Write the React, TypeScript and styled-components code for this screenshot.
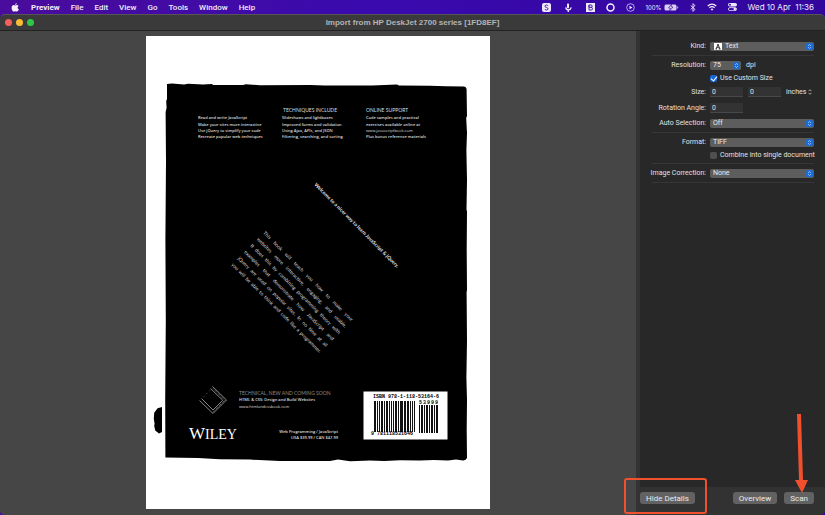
import React from "react";
import styled, { createGlobalStyle } from "styled-components";

const Global = createGlobalStyle`
  * { box-sizing: border-box; }
  html, body, #root { margin: 0; height: 100%; }
  body {
    font-family: Roboto, "Liberation Sans", sans-serif;
    font-size: 7px;
    line-height: 9px;
    color: #e2e2e2;
    background: #1c0a3c;
  }
  button, input, select { font: inherit; color: inherit; margin: 0; }
`;

const Desktop = styled.div`
  display: flex;
  flex-direction: column;
  min-height: 100vh;
  background: linear-gradient(90deg, #4a0c9c 0%, #3a0aae 45%, #32069c 100%);
`;

const MenuBar = styled.nav`
  display: flex;
  align-items: center;
  justify-content: space-between;
  height: 14px;
  padding: 0 11px;
  font-size: 8px;
  color: #f1ecfa;
`;

const MenuGroup = styled.div<{ $gap?: number }>`
  display: flex;
  align-items: center;
  gap: ${(p) => p.$gap ?? 11}px;
  white-space: nowrap;
`;

const MenuItem = styled.button<{ $bold?: boolean }>`
  padding: 0;
  border: 0;
  background: none;
  font-weight: ${(p) => (p.$bold ? 700 : 500)};
`;

const Battery = styled.span`
  display: flex;
  align-items: center;
  gap: 2px;
  font-family: Inter, sans-serif;
  font-size: 6px;
`;

const Clock = styled.span`
  font-family: Inter, sans-serif;
`;

const Window = styled.main`
  flex: 1;
  display: flex;
  flex-direction: column;
  border-radius: 5px;
  border-top: 1px solid #555;
  overflow: hidden;
  background: #464646;
`;

const TitleBar = styled.header`
  display: grid;
  grid-template-columns: 1fr auto 1fr;
  align-items: center;
  height: 16px;
  padding: 0 5px;
  background: #3a3a3a;
  border-bottom: 1px solid #222;
`;

const Lights = styled.div`
  display: flex;
  gap: 4px;
`;

const Light = styled.button<{ $color: string }>`
  width: 7px;
  height: 7px;
  padding: 0;
  border: 0;
  border-radius: 50%;
  background: ${(p) => p.$color};
`;

const Title = styled.h1`
  margin: 0;
  font-family: "Liberation Sans", sans-serif;
  font-size: 8px;
  font-weight: 700;
  color: #b4b4b4;
`;

const Body = styled.div`
  flex: 1;
  display: flex;
`;

const Preview = styled.section`
  flex: 1;
  display: flex;
  justify-content: center;
  align-items: flex-start;
  padding-top: 5px;
  background: #464646;
`;

const Divider = styled.div`
  width: 4px;
  background: #333;
`;

const Sidebar = styled.aside`
  display: flex;
  flex-direction: column;
  width: 185px;
  background: #282828;
`;

const Form = styled.form`
  flex: 1;
  display: flex;
  flex-direction: column;
  padding: 6px 11px 0 12px;
`;

const Section = styled.div`
  display: flex;
  flex-direction: column;
  gap: 4px;
  padding: 4px 0;
  border-bottom: 1px solid #363636;
`;

const Row = styled.div<{ $height?: number }>`
  display: grid;
  grid-template-columns: 54px 1fr;
  column-gap: 4px;
  align-items: center;
  height: ${(p) => p.$height ?? 10}px;
`;

const Label = styled.label`
  justify-self: end;
  white-space: nowrap;
`;

const Controls = styled.div`
  grid-column: 2;
  display: flex;
  align-items: center;
  gap: 5px;
`;

const SelectBox = styled.span<{ $width?: number }>`
  position: relative;
  display: block;
  width: ${(p) => (p.$width ? `${p.$width}px` : "100%")};
  height: 9px;
`;

const NativeSelect = styled.select<{ $indent?: number }>`
  appearance: none;
  display: block;
  width: 100%;
  height: 9px;
  padding: 0 10px 0 ${(p) => p.$indent ?? 3}px;
  border: 0;
  border-radius: 2px;
  background: #5d5d5d;
  color: #ececec;
`;

const SelectArrow = styled.svg`
  position: absolute;
  right: 1px;
  top: 1px;
  pointer-events: none;
`;

const SelectIcon = styled.svg`
  position: absolute;
  left: 4px;
  top: 1px;
  pointer-events: none;
`;

const Field = styled.input`
  width: 33px;
  height: 10px;
  padding: 0 2px;
  border: 0;
  border-bottom: 1px solid #484848;
  background: #333;
  line-height: 9px;
`;

const UnitBox = styled.span`
  display: flex;
  align-items: center;
  gap: 1px;
`;

const UnitSelect = styled.select`
  appearance: none;
  padding: 0;
  border: 0;
  background: none;
`;

const CheckLabel = styled.label`
  display: flex;
  align-items: center;
  gap: 3px;
  line-height: 8px;
  white-space: nowrap;
`;

const Tick = styled.input`
  appearance: none;
  display: grid;
  place-content: center;
  width: 7px;
  height: 7px;
  border-radius: 2px;
  background: #505050;
  &:checked { background: #1765d8; }
  &:checked::after {
    content: "";
    width: 3px;
    height: 5px;
    border: solid #fff;
    border-width: 0 1px 1px 0;
    transform: rotate(40deg);
  }
`;

const Footer = styled.footer`
  display: flex;
  justify-content: space-between;
  align-items: flex-start;
  height: 28px;
  padding: 5px 11px 0 0;
  background: #323232;
`;

const Actions = styled.div`
  display: flex;
  gap: 7px;
`;

const Anchor = styled.div`
  position: relative;
`;

const PushButton = styled.button`
  display: block;
  height: 12px;
  padding: 0 6px;
  border: 0;
  border-radius: 3px;
  background: #626262;
  color: #ececec;
  font-size: 8px;
  line-height: 11px;
  white-space: nowrap;
`;

const Highlight = styled.div`
  position: absolute;
  inset: -14px -12px -10px -16px;
  border: 2px solid #f0502d;
  border-radius: 3px;
  pointer-events: none;
`;

const Arrow = styled.svg`
  position: absolute;
  right: 6px;
  bottom: 11px;
  pointer-events: none;
`;

const Paragraph = styled.div`
  width: 125px;
  font-family: Lato, sans-serif;
  font-size: 5px;
  line-height: 9px;
  color: #dcdcdc;
  text-align: justify;
  text-align-last: justify;
  white-space: nowrap;
`;

const ScanText = styled.text<{ $size: number; $weight?: number }>`
  font-family: ${(p) => (p.$size === 4 ? '"Open Sans"' : "Lato")}, sans-serif;
  font-size: ${(p) => p.$size}px;
  font-weight: ${(p) => p.$weight ?? 400};
`;

const SerifText = styled.text<{ $size: number }>`
  font-family: "Liberation Serif", serif;
  font-size: ${(p) => p.$size}px;
  fill: #fff;
`;

const MonoText = styled.text<{ $size: number }>`
  font-family: "Liberation Mono", monospace;
  font-size: ${(p) => p.$size}px;
  font-weight: 700;
  fill: #000;
`;

function Chevrons() {
  return (
    <SelectArrow width="7" height="7" viewBox="0 0 7 7">
      <rect width="7" height="7" rx="1.5" fill="#1b6cd6" />
      <path d="M2.200 2.800 3.500 1.500 4.800 2.800M2.200 4.200 3.500 5.500 4.800 4.200" fill="none" stroke="#dbe8fb" strokeWidth=".7" />
    </SelectArrow>
  );
}

function Select({ id, value, width, icon }: { id: string; value: string; width?: number; icon?: boolean }) {
  return (
    <SelectBox $width={width}>
      <NativeSelect id={id} $indent={icon ? 15 : 3}>
        <option>{value}</option>
      </NativeSelect>
      {icon && (
        <SelectIcon width="8" height="7" viewBox="0 0 8 7">
          <rect width="8" height="7" fill="#fff" />
          <path d="M1.500 6h1.600M4.600 6h2M2.200 6 4 1l1.800 5M2.800 4.300h2.400" fill="none" stroke="#111" strokeWidth=".8" />
        </SelectIcon>
      )}
      <Chevrons />
    </SelectBox>
  );
}

type Line = [number, number, number, string, number?];

const scanLines: Line[] = [
  [198, 119, 4, "Read and write JavaScript", 600],
  [198, 126, 4, "Make your sites more interactive", 600],
  [198, 132, 4, "Use jQuery to simplify your code", 600],
  [198, 138, 4, "Recreate popular web techniques", 600],
  [283, 112, 5, "TECHNIQUES INCLUDE"],
  [282, 119, 4, "Slideshows and lightboxes", 600],
  [282, 126, 4, "Improved forms and validation", 600],
  [282, 132, 4, "Using Ajax, APIs, and JSON", 600],
  [282, 138, 4, "Filtering, searching, and sorting", 600],
  [366, 112, 5, "ONLINE SUPPORT"],
  [366, 119, 4, "Code samples and practical", 600],
  [366, 126, 4, "exercises available online at", 600],
  [366, 132, 4, "www.javascriptbook.com"],
  [366, 138, 4, "Plus bonus reference materials", 600],
  [239, 401, 4, "HTML & CSS: Design and Build Websites", 600],
  [239, 408, 4, "www.htmlandcssbook.com"],
];

const paragraph = [
  "This book will teach you how to make your",
  "websites more interactive, engaging, and usable.",
  "It does this by combining programming theory with",
  "examples that demonstrate how JavaScript and",
  "jQuery are used on popular sites. In no time at all",
  "you will be able to think and code like a programmer.",
];

const bars: [number, number][] = [
  [374, 2], [377, 1], [379, 1], [381, 2], [384, 1], [386, 2], [389, 1], [391, 1], [393, 1], [395, 2],
  [398, 1], [400, 3], [404, 2], [407, 2], [410, 1], [412, 1], [414, 1],
];
const addonBars: [number, number][] = [
  [419, 1], [421, 2], [424, 1], [426, 2], [429, 1], [431, 2], [434, 1], [436, 2],
];

function ScannedPage() {
  return (
    <svg width="344" height="473" viewBox="146 36 344 473" role="img" aria-label="Scanned book cover">
      <rect x="146" y="36" width="344" height="473" fill="#fff" />
      <path
        fill="#000"
        d="M167 84 172 83.600 184 84.400 188 83.800 203 84.600 212 84 213 85 243 85 246 84.300 260 85.200 310 85 325 85.400 372 85.600 397 84.600 399 85.400 430 85.800 446 86.200 464 86.500Q467 87 466.600 91L467 116 466.200 118 467 133 466.400 150 467 180 466.500 210 467 211 466.700 250 467 290 466.600 292 467 340 466.400 378 467 400 466.700 430 467 458Q466 460.600 463 460.400L456 459.400 448 460.600 434 460 420 460.600 400 460.200 384 461 370 460.400 350 461.300 338 459.600 330 461 280 461 250 459.600 220 459.200 198 458 165.400 457.600 165.200 400 165.800 320 165.400 240 166 160 165.600 112 166.600 108 166.200 101 167 99Z"
      />
      <path d="M162 407v25l-3 1.600-3.800-3.200-1-4.600.4-2-.8-5 .4-6 3.400-4.600Z" fill="#000" />
      <g fill="#dedede">
        {scanLines.map(([x, y, size, text, weight]) => (
          <ScanText key={text} x={x} y={y} $size={size} $weight={weight}>{text}</ScanText>
        ))}
        <ScanText x="239" y="395" $size={5} fill="#8c8c8c">TECHNICAL, NEW AND COMING SOON</ScanText>
        <ScanText x="338" y="433" textAnchor="end" $size={4} $weight={600}>Web Programming / JavaScript</ScanText>
        <ScanText x="338" y="439" textAnchor="end" $size={4} $weight={600}>USA $39.99 / CAN $47.99</ScanText>
        <ScanText transform="translate(314 185) rotate(45)" $size={5} $weight={900}>
          Welcome to a nicer way to learn JavaScript &amp; jQuery.
        </ScanText>
      </g>
      <foreignObject width="130" height="60" transform="translate(267 229) rotate(45)">
        <Paragraph>
          {paragraph.map((line) => <div key={line}>{line}</div>)}
        </Paragraph>
      </foreignObject>
      <g fill="none" stroke="#a8a8a8" strokeWidth=".8">
        <path d="M212.500 386.500 226.500 400 213 413.500 199.500 400.500" />
        <path d="M210.500 388.500 222.800 400.300 213 410 201.500 398.500" />
        <path d="M213 388.500 224.800 400.300 213 411.800" strokeDasharray="1 1" />
        <path d="M204 396.500 210.500 390" strokeDasharray=".8 3" />
      </g>
      <SerifText x="189" y="439" $size={17}>W</SerifText>
      <SerifText x="205" y="439" $size={14}>ILEY</SerifText>
      <rect x="363.500" y="391.500" width="84" height="48" fill="#fff" />
      <MonoText x="373" y="398" $size={5}>ISBN 978-1-118-53164-6</MonoText>
      <g fill="#111">
        {["5", "3", "9", "9", "9"].map((digit, i) => (
          <MonoText key={i} x={419 + i * 4} y="404" $size={5}>{digit}</MonoText>
        ))}
        {bars.map(([x, w]) => <rect key={x} x={x} y="401" width={w} height="31" />)}
        {addonBars.map(([x, w]) => <rect key={x} x={x} y="405" width={w} height="28" />)}
      </g>
      <MonoText x="371" y="435" $size={5}>9 781118531646</MonoText>
    </svg>
  );
}

export default function App() {
  return (
    <Desktop>
      <Global />
      <MenuBar>
        <MenuGroup>
          <svg width="9" height="9" viewBox="0 0 17 19" fill="#f4f0fc">
            <path d="M11.200 0c.2 1.900-1.600 4.200-3.500 4.100C7.500 2.200 9.300.2 11.200 0ZM8 5.200c.8 0 1.900-1 3.600-1 1.500.1 2.800.8 3.500 1.900-3.200 1.900-2.600 6 .6 7.300-.8 2.300-2.400 4.800-4.100 4.800-1.300 0-1.800-.8-3.300-.8s-2 .8-3.300.8C2.800 18.200.4 14.300.3 10.300.2 6.600 2.500 4.300 4.900 4.300c1.400 0 2.300.9 3.100.9Z" />
          </svg>
          <MenuItem $bold>Preview</MenuItem>
          {["File", "Edit", "View", "Go", "Tools", "Window", "Help"].map((m) => <MenuItem key={m}>{m}</MenuItem>)}
        </MenuGroup>
        <MenuGroup>
          <MenuGroup $gap={14}>
            <svg width="9" height="9" viewBox="0 0 9 9">
              <rect width="9" height="9" rx="2" fill="#eee8fb" />
              <path d="M6 3Q5.700 2 4.500 2 3 2 3 3.200 3 4.300 4.500 4.500 6 4.700 6 5.800 6 7 4.500 7 3.200 7 3 6" fill="none" stroke="#4a20a8" />
            </svg>
            <svg width="7" height="9" viewBox="0 0 7 9">
              <path d="M2 .8Q3 0 4 .8v4Q3 6 2 4.800Z" fill="#eee8fb" />
              <path d="M.7 4.300Q1 6.800 3.500 6.800 5.800 6.600 6.200 4.300M3.300 6.500V9" fill="none" stroke="#eee8fb" strokeWidth="1.300" />
            </svg>
            <svg width="9" height="9" viewBox="0 0 9 9">
              <rect width="9" height="9" fill="#eee8fb" />
              <path d="M3 2h2q1.200 0 1.200 1.200T5 4.400H3V2v5h2.300Q6.500 7 6.500 5.700T5 4.400" fill="none" stroke="#4a20a8" />
            </svg>
          </MenuGroup>
          <svg width="9" height="9" viewBox="0 0 9 9">
            <circle cx="4.500" cy="4.500" r="3.500" fill="none" stroke="#f4f0fc" strokeWidth="1.500" />
          </svg>
          <svg width="9" height="9" viewBox="0 0 9 9">
            <circle cx="4.500" cy="4.500" r="3.800" fill="none" stroke="#d9cff2" strokeWidth=".8" />
            <path d="M3.500 2.700v3.600l3-1.800Z" fill="#eee8fb" />
          </svg>
          <Battery>
            100%
            <svg width="15" height="7" viewBox="0 0 15 7">
              <rect x=".5" y=".5" width="12" height="6" rx="1.500" fill="#d9cff2" />
              <path d="M13.300 2.300v2.400q1-.3 1-1.200t-1-1.200Z" fill="#d9cff2" />
              <path d="M7.500 0 4.500 4h2L5.500 7l3.500-4h-2Z" fill="#fff" stroke="#3a0aae" strokeWidth=".7" />
            </svg>
          </Battery>
          <svg width="6" height="9" viewBox="0 0 6 9">
            <path d="M.7 2.500 5 6.400 3 8.400V.6l2 2L.7 6.500" fill="none" stroke="#eee8fb" strokeWidth=".9" />
          </svg>
          <svg width="10" height="8" viewBox="0 0 10 8">
            <path d="M.7 3Q5-.8 9.300 3M2.400 4.800q2.600-2.200 5.200 0" fill="none" stroke="#f4f0fc" strokeWidth="1.200" />
            <path d="M3.600 6q1.400-1 2.800 0L5 7.700Z" fill="#f4f0fc" />
          </svg>
          <svg width="9" height="8" viewBox="0 0 9 8">
            <rect width="9" height="3.600" rx="1.800" fill="#eee8fb" />
            <circle cx="2" cy="1.800" r="1" fill="#3a0aae" />
            <rect x=".4" y="4.600" width="8.200" height="3" rx="1.500" fill="none" stroke="#eee8fb" strokeWidth=".8" />
            <circle cx="6.800" cy="6.100" r="1.300" fill="#eee8fb" />
          </svg>
          <Clock>Wed 10 Apr&nbsp; 11:36</Clock>
        </MenuGroup>
      </MenuBar>
      <Window>
        <TitleBar>
          <Lights>
            <Light $color="#f4605a" aria-label="Close" />
            <Light $color="#f8bd33" aria-label="Minimize" />
            <Light $color="#2fc746" aria-label="Zoom" />
          </Lights>
          <Title>Import from HP DeskJet 2700 series [1FD8EF]</Title>
        </TitleBar>
        <Body>
          <Preview><ScannedPage /></Preview>
          <Divider />
          <Sidebar>
            <Form>
              <Section>
                <Row>
                  <Label htmlFor="kind">Kind:</Label>
                  <Controls><Select id="kind" value="Text" icon /></Controls>
                </Row>
              </Section>
              <Section>
                <Row>
                  <Label htmlFor="resolution">Resolution:</Label>
                  <Controls><Select id="resolution" value="75" width={31} />dpi</Controls>
                </Row>
                <Row $height={8}>
                  <Controls><CheckLabel><Tick type="checkbox" defaultChecked />Use Custom Size</CheckLabel></Controls>
                </Row>
                <Row $height={12}>
                  <Label htmlFor="width">Size:</Label>
                  <Controls>
                    <Field id="width" defaultValue="0" />
                    <Field aria-label="Height" defaultValue="0" />
                    <UnitBox>
                      <UnitSelect aria-label="Unit"><option>inches</option></UnitSelect>
                      <svg width="4" height="6" viewBox="0 0 4 6"><path d="M.5 2.200 2 .7l1.500 1.500M.5 3.800 2 5.300l1.500-1.500" fill="none" stroke="#ccc" strokeWidth=".8" /></svg>
                    </UnitBox>
                  </Controls>
                </Row>
                <Row $height={12}>
                  <Label htmlFor="angle">Rotation Angle:</Label>
                  <Controls><Field id="angle" defaultValue="0" /></Controls>
                </Row>
                <Row>
                  <Label htmlFor="auto">Auto Selection:</Label>
                  <Controls><Select id="auto" value="Off" /></Controls>
                </Row>
              </Section>
              <Section>
                <Row>
                  <Label htmlFor="format">Format:</Label>
                  <Controls><Select id="format" value="TIFF" /></Controls>
                </Row>
                <Row $height={8}>
                  <Controls><CheckLabel><Tick type="checkbox" />Combine into single document</CheckLabel></Controls>
                </Row>
              </Section>
              <Section>
                <Row>
                  <Label htmlFor="correction">Image Correction:</Label>
                  <Controls><Select id="correction" value="None" /></Controls>
                </Row>
              </Section>
            </Form>
            <Footer>
              <Anchor>
                <PushButton>Hide Details</PushButton>
                <Highlight />
              </Anchor>
              <Actions>
                <PushButton>Overview</PushButton>
                <Anchor>
                  <PushButton>Scan</PushButton>
                  <Arrow width="14" height="79" viewBox="0 0 14 79">
                    <path d="M3 0h4l2 66h5L8 79 1 66h4Z" fill="#f0502d" />
                  </Arrow>
                </Anchor>
              </Actions>
            </Footer>
          </Sidebar>
        </Body>
      </Window>
    </Desktop>
  );
}
